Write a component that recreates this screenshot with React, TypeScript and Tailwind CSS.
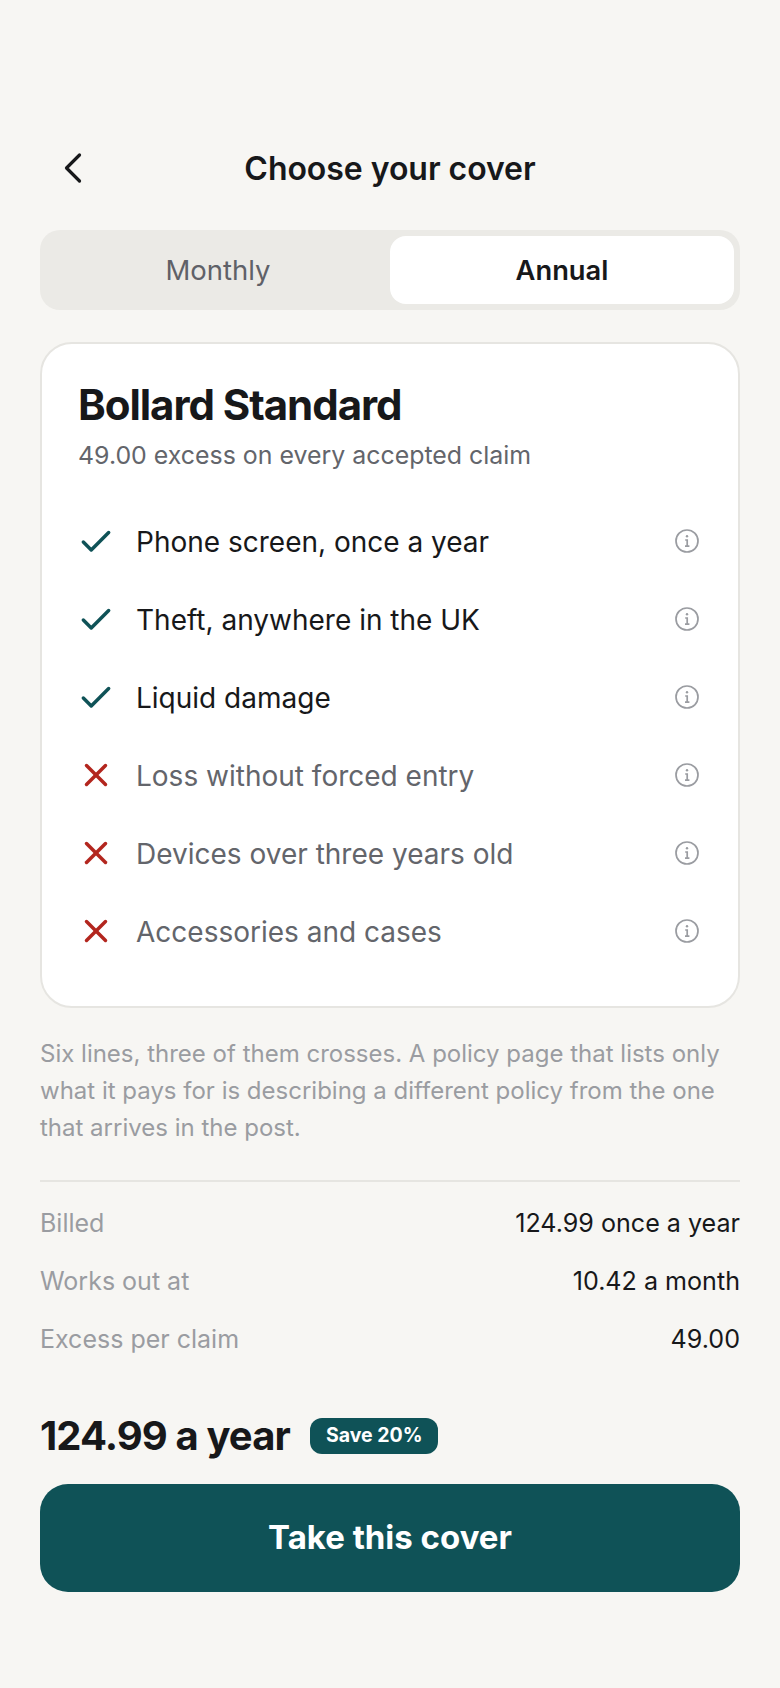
import { Check, ChevronLeft, X } from 'lucide-react';

const lines = [
  { label: 'Phone screen, once a year', covered: true },
  { label: 'Theft, anywhere in the UK', covered: true },
  { label: 'Liquid damage', covered: true },
  { label: 'Loss without forced entry', covered: false },
  { label: 'Devices over three years old', covered: false },
  { label: 'Accessories and cases', covered: false },
];

const summary = [
  { label: 'Billed', value: '124.99 once a year' },
  { label: 'Works out at', value: '10.42 a month' },
  { label: 'Excess per claim', value: '49.00' },
];

function InfoIcon() {
  return (
    <svg viewBox="0 0 24 24" fill="none" stroke="currentColor" strokeWidth={1.7} className="mb-[3px] mr-[3px] h-6 w-6 text-[#9a9ca1]">
      <circle cx="12" cy="12" r="11" />
      <circle cx="12" cy="7.3" r="1.2" fill="currentColor" stroke="none" />
      <path d="M10.2 11H12.2V17M10 17.2H14.4" />
    </svg>
  );
}

export default function App() {
  return (
    <div className="h-[1688px] overflow-hidden bg-[#f7f6f3] px-10 pt-[134px] font-['Inter',sans-serif] text-[#17181a]">
      {/* Header */}
      <div className="relative flex h-[70px] items-center justify-center">
        <ChevronLeft className="absolute left-[7px] top-[8px] h-[52px] w-[52px]" strokeWidth={1.5} />
        <h1 className="text-[32px] font-semibold tracking-[-0.05px]">Choose your cover</h1>
      </div>

      {/* Billing toggle */}
      <div className="mt-[26px] grid h-20 grid-cols-2 rounded-[20px] bg-[#ebeae6] p-1.5">
        <div className="flex items-center justify-center pt-0.5 text-[27.5px] font-normal text-[#5f6168]">Monthly</div>
        <div className="flex items-center justify-center rounded-[16px] bg-white pt-0.5 text-[27.3px] font-semibold">Annual</div>
      </div>

      {/* Plan card */}
      <div className="mt-8 h-[666px] rounded-[32px] border-2 border-[#e6e5e1] bg-white px-[36px] pt-[33px]">
        <h2 className="text-[42px] font-bold leading-[56px] tracking-[-1.05px]">Bollard Standard</h2>
        <p className="mt-[4px] text-[24.9px] leading-[36px] text-[#63656b]">49.00 excess on every accepted claim</p>
        <ul className="mt-[30px]">
          {lines.map((line) => (
            <li key={line.label} className="flex h-[78px] items-center">
              {line.covered ? (
                <Check className="-ml-px h-[38px] w-[38px] text-[#0f5257]" strokeWidth={2.2} />
              ) : (
                <X className="-ml-px mb-[2px] h-[38px] w-[38px] text-[#b3261e]" strokeWidth={2.2} />
              )}
              <span className={`ml-[21px] flex-1 text-[28px] ${line.covered ? 'text-[#17181a]' : 'text-[#63656b]'}`}>
                {line.label}
              </span>
              <InfoIcon />
            </li>
          ))}
        </ul>
      </div>

      <p className="mt-[27px] text-[24px] leading-[37px] text-[#9a9ca1]">
        Six lines, three of them crosses. A policy page that lists only what it pays for is describing a different policy from the one that arrives in the post.
      </p>

      {/* Summary */}
      <div className="mt-[34px] border-t-2 border-[#e6e5e1] pt-[13px]">
        {summary.map((row) => (
          <div key={row.label} className="flex h-[58px] items-center justify-between text-[25px]">
            <span className="text-[#9a9ca1]">{row.label}</span>
            <span className="text-[25.1px]">{row.value}</span>
          </div>
        ))}
      </div>

      {/* Price and action */}
      <div className="mt-[32px] flex h-[70px] items-center gap-5">
        <span className="text-[40px] font-bold tracking-[-0.9px]">124.99 a year</span>
        <span className="flex h-9 items-center rounded-[12px] bg-[#0f5257] px-4 text-[19.5px] font-bold text-white">Save 20%</span>
      </div>
      <button className="mt-[13px] h-[108px] w-full rounded-[28px] bg-[#0f5257] text-[33px] font-bold text-white">
        Take this cover
      </button>
    </div>
  );
}
